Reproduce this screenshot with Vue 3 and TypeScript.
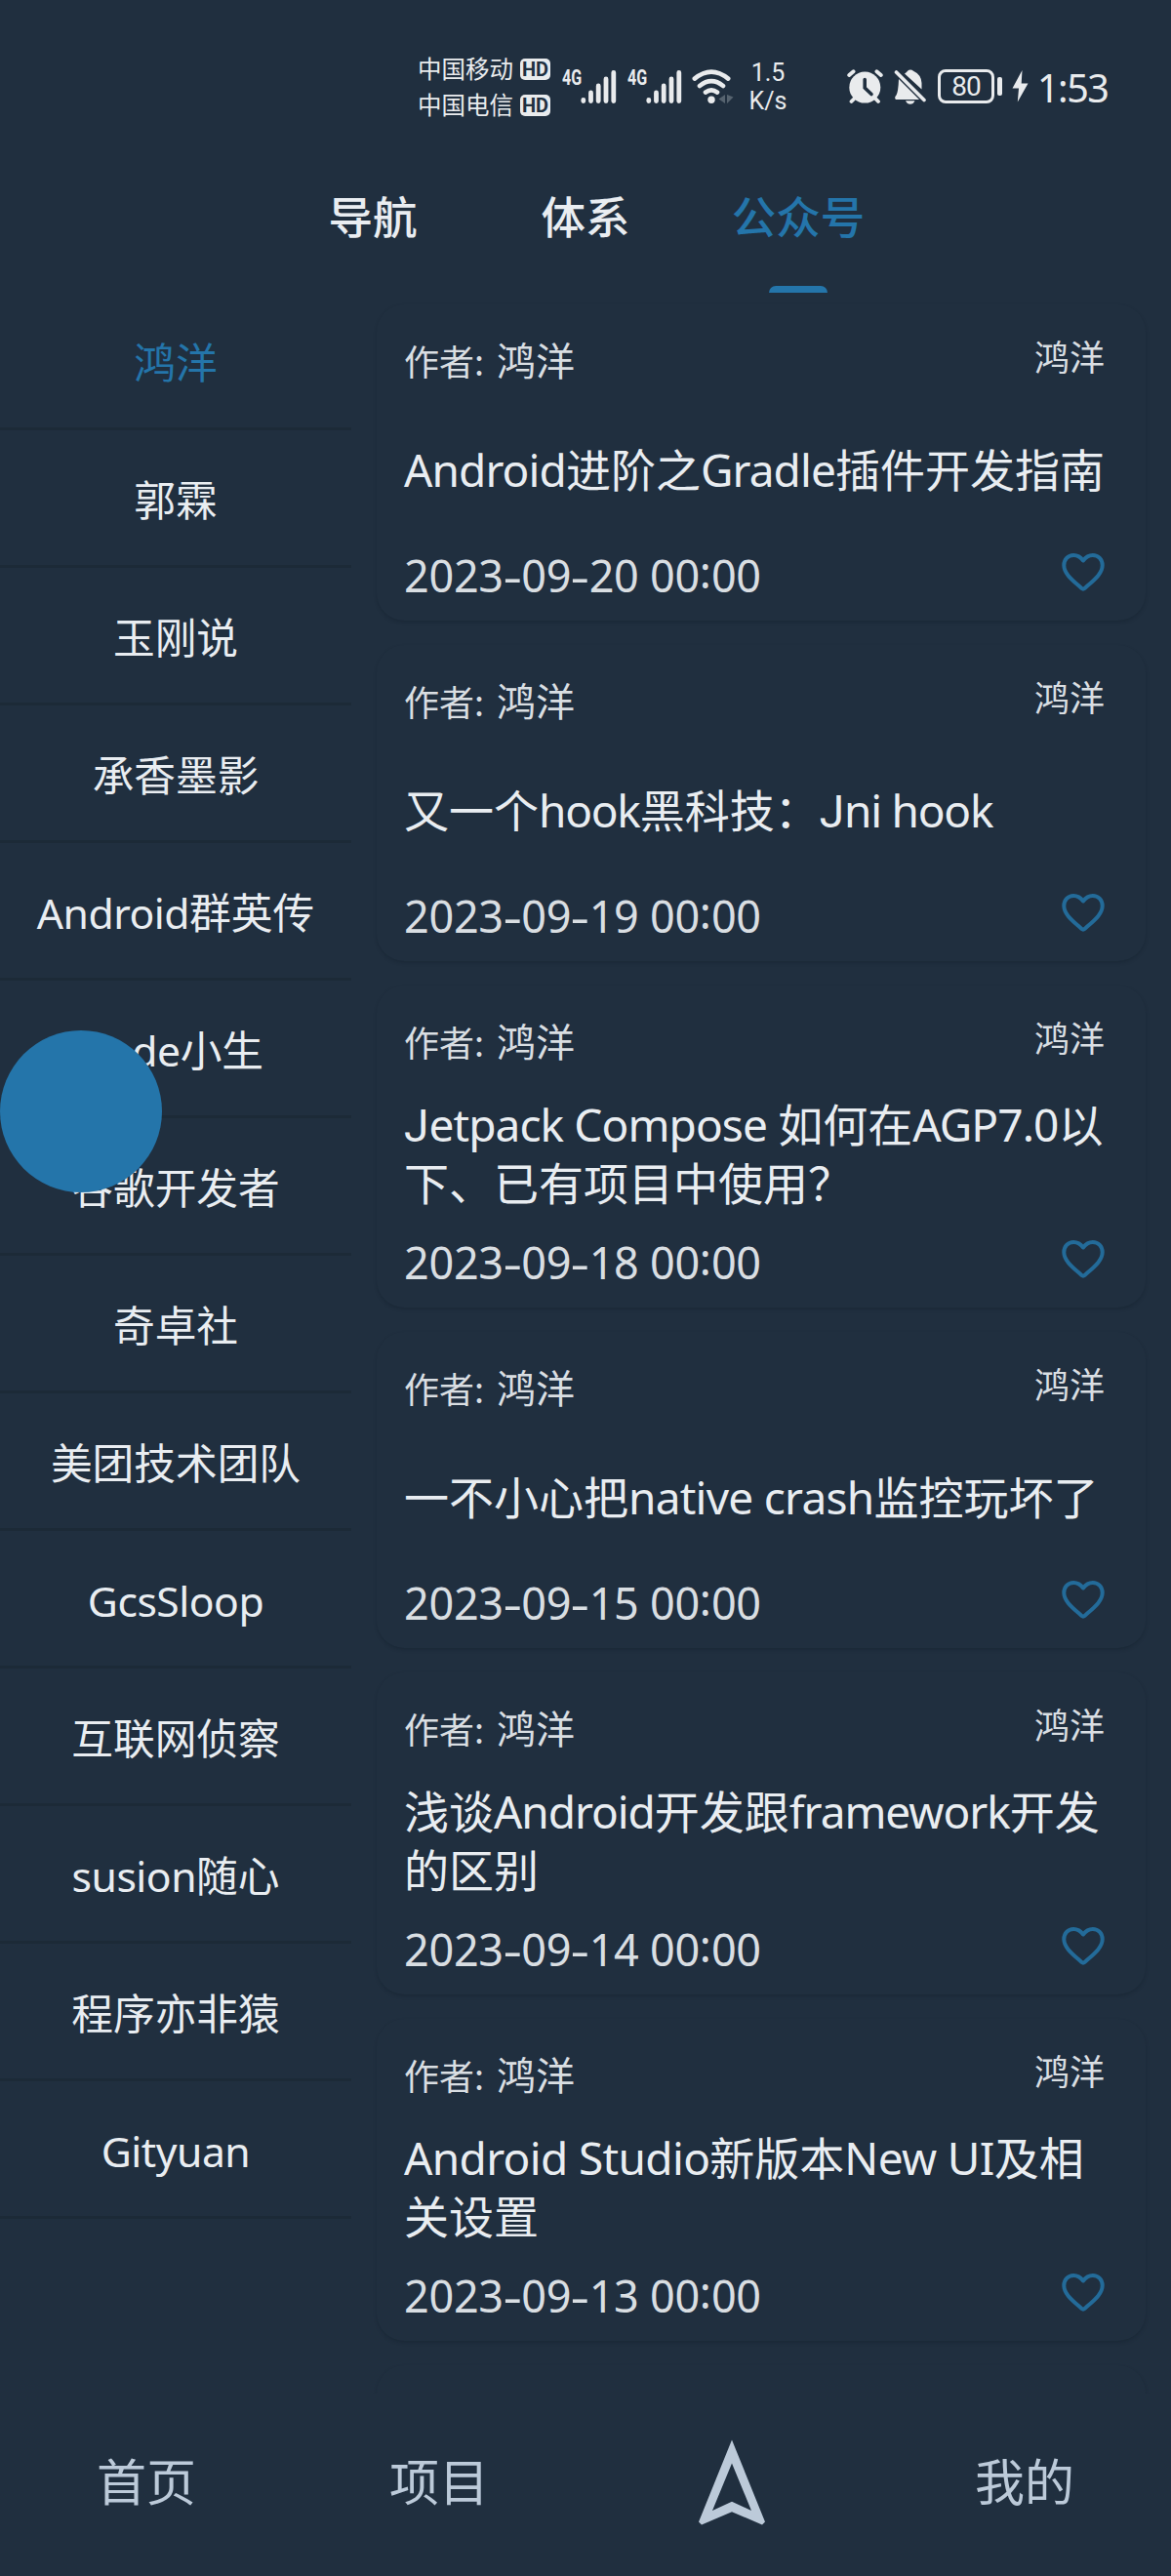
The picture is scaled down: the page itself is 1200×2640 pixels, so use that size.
<script setup lang="ts">
interface Article {
  title: string[]
  date: string
  track: number
}
interface Run {
  text: string
  kind: string
}

const tabs: string[] = ['导航', '体系', '公众号']
const accounts: string[] = [
  '鸿洋', '郭霖', '玉刚说', '承香墨影', 'Android群英传', 'code小生', '谷歌开发者',
  '奇卓社', '美团技术团队', 'GcsSloop', '互联网侦察', 'susion随心', '程序亦非猿', 'Gityuan',
]
const articles: Article[] = [
  { title: ['Android进阶之Gradle插件开发指南'], date: '2023-09-20 00:00', track: -0.9 },
  { title: ['又一个hook黑科技：Jni hook'], date: '2023-09-19 00:00', track: -1.25 },
  { title: ['Jetpack Compose 如何在AGP7.0以', '下、已有项目中使用？'], date: '2023-09-18 00:00', track: -0.9 },
  { title: ['一不小心把native crash监控玩坏了'], date: '2023-09-15 00:00', track: -0.75 },
  { title: ['浅谈Android开发跟framework开发', '的区别'], date: '2023-09-14 00:00', track: -1.05 },
  { title: ['Android Studio新版本New UI及相', '关设置'], date: '2023-09-13 00:00', track: -0.65 },
]

// Splits mixed text so Latin and Chinese runs can be tracked separately.
function runs(text: string): Run[] {
  return (text.match(/J|[\x20-\x49\x4b-\x7e]+|[^\x20-\x7e]+/g) ?? []).map((t) => ({
    text: t,
    kind: t === 'J' ? 'cap-j' : /^[\x20-\x7e]/.test(t) ? 'latin' : 'han',
  }))
}
function dateRuns(date: string): Run[] {
  return date.split(/([-:])/).map((t) => ({ text: t, kind: t === '-' ? 'dash' : t === ':' ? 'colon' : 'num' }))
}
</script>

<template>
  <div class="screen">
    <header class="status">
      <div class="carriers">
        <div v-for="c in ['中国移动', '中国电信']" :key="c" class="carrier">
          <span>{{ c }}</span><span class="hd">HD</span>
        </div>
      </div>
      <div v-for="n in 2" :key="n" class="signal">
        <span class="gen">4G</span>
        <svg width="37" height="36" viewBox="0 0 37 36" fill="none" stroke="#e9ebed" stroke-width="4.8" stroke-linecap="round">
          <path d="M2.8 31.5v1M10.5 24v8.500M18.200 17v15.500M26 10v22.500M33.800 3.500v29" />
        </svg>
      </div>
      <svg class="wifi" width="44" height="36" viewBox="0 0 44 36" fill="none" stroke="#e9ebed" stroke-width="4.6" stroke-linecap="round">
        <path d="M2.800 9.600Q20 -4.400 37.200 9.600M8 17Q20 7.400 32 17M14 23.600Q20 19 26 23.600" />
        <circle cx="20" cy="31.300" r="3.700" fill="#e9ebed" stroke="none" />
        <path d="M34 26v9l-6.500-4.500zM36 26v9l6.500-6.500z" fill="#56636f" stroke="none" />
      </svg>
      <div class="speed"><span>1.5</span><span>K/s</span></div>
      <svg class="alarm" width="37" height="36" viewBox="0 0 37 36" fill="none" stroke="#e9ebed" stroke-linecap="round">
        <circle cx="18.300" cy="18.600" r="16" fill="#e9ebed" stroke="none" />
        <path d="M2.200 6L6.600 2.200M30.400 2.200L34.800 6M7 30.500L4.500 33M29.600 30.500L32 33" stroke-width="3.800" />
        <path d="M18.200 10.500v8.500L25 25.500" stroke="#202f3f" stroke-width="3.600" />
      </svg>
      <svg class="bell" width="34" height="36" viewBox="0 0 34 36">
        <path d="M11 4.500Q13.500 3 14 1.800Q17 -.8 20 1.800Q28 5.500 28.500 14V20.500z" fill="#e9ebed" />
        <path d="M5 10L26 31H2Q0 29 2.500 26.500Q4.500 23 5 10z" fill="#e9ebed" />
        <path d="M12 32.300h9.500q-1.500 3.500-4.700 3.500t-4.800-3.500z" fill="#e9ebed" />
        <path d="M2.500 3L31 31.500" stroke="#e9ebed" stroke-width="3.600" stroke-linecap="round" />
      </svg>
      <div class="battery">80</div>
      <div class="nub"></div>
      <svg class="bolt" width="17" height="33" viewBox="0 0 17 33"><path d="M10.500 0L.5 18.500H7L5.800 32.500L16.500 13.500H9.700z" fill="#e9ebed" /></svg>
      <span class="clock">1:53</span>
    </header>

    <nav class="tabs">
      <div v-for="(t, i) in tabs" :key="t" class="tab" :class="{ active: i === 2 }">
        <span>{{ t }}</span>
        <i v-if="i === 2" class="indicator"></i>
      </div>
    </nav>

    <main class="body">
      <aside class="side">
        <div v-for="(a, i) in accounts" :key="a" class="account" :class="{ active: i === 0 }">
          <div><span v-for="(r, k) in runs(a)" :key="k" :class="r.kind">{{ r.text }}</span></div>
        </div>
      </aside>
      <section class="list">
        <article v-for="a in articles" :key="a.date" class="card">
          <div class="meta">
            <span class="label">作者:</span><span class="author">鸿洋</span><span class="source">鸿洋</span>
          </div>
          <div class="title" :style="{ '--track': a.track + 'px' }">
            <div v-for="line in a.title" :key="line" class="line"><span v-for="(r, k) in runs(line)" :key="k" :class="r.kind">{{ r.text }}</span></div>
          </div>
          <div class="foot">
            <div class="date"><span v-for="(r, k) in dateRuns(a.date)" :key="k" :class="r.kind">{{ r.text }}</span></div>
            <svg class="heart" width="44" height="39" viewBox="0 0 44 39" fill="none" stroke="#236b99" stroke-width="4" stroke-linejoin="round">
              <path d="M22 7.500C19 3.500 15.500 2 12.200 2C6.500 2 2.300 6.500 2.300 12.300C2.300 21 11 27.500 20.500 36Q22 37.200 23.500 36C33 27.500 41.700 21 41.700 12.300C41.700 6.500 37.500 2 31.800 2C28.500 2 25 3.500 22 7.500z" />
            </svg>
          </div>
        </article>
        <article class="card next"></article>
      </section>
      <div class="bubble"></div>
    </main>

    <footer class="bottom">
      <div class="item">首页</div>
      <div class="item">项目</div>
      <div class="item">
        <svg width="70" height="88" viewBox="0 0 70 88" fill="#bccad9" fill-rule="evenodd">
          <path d="M35 .5L69 84.500L66 87.500L35 74.200L4 87.500L1 84.500zM35 24.500L15 73L35 63.800L55 73z" />
        </svg>
      </div>
      <div class="item">我的</div>
    </footer>
  </div>
</template>

<style>
body {
  margin: 0;
  background: #202f3f;
}
</style>

<style scoped>
.screen {
  width: 1200px;
  height: 2640px;
  overflow: hidden;
  display: flex;
  flex-direction: column;
  background: #202f3f;
  color: #e9edf1;
  font-family: "Noto Sans", "Noto Sans CJK SC", sans-serif;
}
.status {
  height: 156px;
  padding: 21px 0 0 429px;
  box-sizing: border-box;
  display: flex;
  align-items: center;
  flex: none;
  color: #e9ebed;
}
.status > * { flex: none; }
.carriers { width: 147px; margin-top: -1px; margin-left: -1px; margin-right: 1px; }
.carrier {
  height: 37px;
  display: flex;
  align-items: center;
  font: 24.500px/37px "Noto Sans CJK SC", sans-serif;
  white-space: nowrap;
}
.hd {
  width: 31px;
  height: 22px;
  margin-left: 7px;
  margin-top: 2px;
  border-radius: 5px;
  background: #e9ebed;
  color: #202f3f;
  font: 700 20px/23px Roboto, sans-serif;
  text-align: center;
}
.signal { width: 67px; display: flex; }
.gen {
  width: 19px;
  height: 36px;
  font: 700 22px/17px Roboto, sans-serif;
  transform: scaleX(.73);
  transform-origin: 0 0;
}
.signal svg { flex: none; }
.wifi { margin-left: -1px; }
.speed {
  width: 50px;
  margin-left: 9px;
  display: flex;
  flex-direction: column;
  text-align: center;
  font: 25px/29px Roboto, sans-serif;
}
.alarm { margin-left: 56px; }
.bell { margin-left: 11px; }
.battery {
  width: 58px;
  height: 35px;
  margin-left: 11px;
  box-sizing: border-box;
  border: 3.500px solid #e9ebed;
  border-radius: 8px;
  font: 28px/29px Roboto, sans-serif;
  letter-spacing: -1px;
  text-align: center;
}
.nub { width: 5px; height: 19px; margin-left: 3px; border-radius: 2px; background: #e9ebed; }
.bolt { margin-left: 10px; }
.clock { margin: 2px 0 0 9px; font: 39.500px/44px "Noto Sans"; letter-spacing: -1.500px; }

.tabs {
  height: 144px;
  flex: none;
  display: flex;
  justify-content: center;
}
.tab {
  width: 218px;
  height: 144px;
  display: flex;
  flex-direction: column;
  align-items: center;
  justify-content: space-between;
  font: 500 45.500px/128px "Noto Sans CJK SC", sans-serif;
}
.active { color: #2475aa; }
.indicator { width: 60px; height: 7px; border-radius: 7px 7px 0 0; background: #2475aa; }

.body {
  position: relative;
  height: 2153px;
  flex: none;
  display: flex;
  overflow: hidden;
}
.side { width: 360px; flex: none; }
.account {
  height: 141px;
  box-sizing: border-box;
  border-bottom: 3px solid #1c2a37;
  display: flex;
  align-items: center;
  justify-content: center;
  font-family: "Noto Sans CJK SC", sans-serif;
  font-size: 42.700px;
  line-height: 60px;
  white-space: nowrap;
}
.list {
  flex: 1;
  padding: 12px 26px 0;
  display: flex;
  flex-direction: column;
  gap: 25px;
}
.card {
  flex: none;
  padding: 0 42px 0 28px;
  border-radius: 28px;
  background: #202f3f;
  box-shadow: 0 2px 4px -1px rgba(10, 22, 30, .32);
}
.next { height: 200px; }
.meta {
  height: 110px;
  display: flex;
  align-items: baseline;
  color: #d9dee2;
  font-family: "Noto Sans CJK SC", sans-serif;
  line-height: 112px;
}
.label { font-size: 36px; }
.author { font-size: 40px; margin-left: 13px; }
.source { font-size: 36px; margin-left: auto; position: relative; top: -5px; }
.title {
  min-height: 114px;
  display: flex;
  flex-direction: column;
  justify-content: center;
  font-size: 46px;
}
.line { height: 60px; line-height: 60px; white-space: pre; }
.latin { font-family: "Noto Sans", sans-serif; letter-spacing: var(--track, -.5px); }
.account .latin { line-height: 1; }
.han { font-family: "Noto Sans CJK SC", sans-serif; }
.cap-j { font-family: Roboto, sans-serif; }
.foot { height: 100px; display: flex; justify-content: space-between; }
.date { margin-top: 5px; color: #d9dee2; font-size: 45px; line-height: 98px; height: 90px; white-space: pre; }
.num { letter-spacing: -.3px; }
.dash { display: inline-block; width: 18.500px; text-align: center; transform: scaleX(1.350); }
.colon { position: relative; top: -4px; }
.heart { margin-top: 31px; }
.bubble {
  position: absolute;
  left: 0;
  top: 756px;
  width: 166px;
  height: 166px;
  border-radius: 50%;
  background: #2475aa;
}

.bottom { flex: 1; display: flex; background: #202f3f; }
.item {
  width: 300px;
  height: 182px;
  display: flex;
  align-items: center;
  justify-content: center;
  color: #bccad9;
  font: 51px/176px "Noto Sans CJK SC", sans-serif;
}
.item:not(:has(svg)) { height: 176px; }
</style>
